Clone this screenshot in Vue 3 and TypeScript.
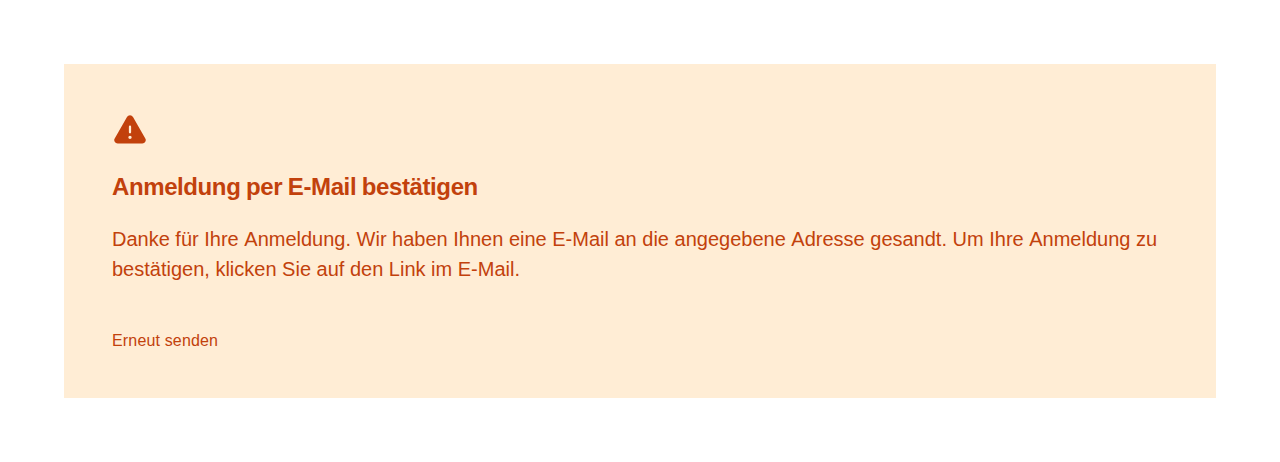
<script setup lang="ts">
const title: string = 'Anmeldung per E-Mail bestätigen'
const message: string =
  'Danke für Ihre Anmeldung. Wir haben Ihnen eine E-Mail an die angegebene Adresse gesandt. Um Ihre Anmeldung zu bestätigen, klicken Sie auf den Link im E-Mail.'
const action: string = 'Erneut senden'
</script>

<template>
  <main class="page">
    <section class="notice" role="status">
      <svg class="icon" viewBox="0 0 256 256" aria-hidden="true">
        <path
          fill="currentColor"
          d="M236.8,188.09,149.35,36.22h0a24.76,24.76,0,0,0-42.7,0L19.2,188.09a23.51,23.51,0,0,0,0,23.72A24.35,24.35,0,0,0,40.55,224h174.9a24.35,24.35,0,0,0,21.33-12.19A23.51,23.51,0,0,0,236.8,188.09ZM120,104a8,8,0,0,1,16,0v40a8,8,0,0,1-16,0Zm8,88a12,12,0,1,1,12-12A12,12,0,0,1,128,192Z"
        />
      </svg>
      <h1 class="title">{{ title }}</h1>
      <p class="message">{{ message }}</p>
      <button class="action" type="button">{{ action }}</button>
    </section>
  </main>
</template>

<style>
body {
  margin: 0;
  background: #fff;
}
</style>

<style scoped>
.page {
  padding: 64px;
  font-family: "Liberation Sans", Arial, sans-serif;
}
.notice {
  display: flex;
  flex-direction: column;
  align-items: flex-start;
  padding: 48px;
  background: #ffedd5;
  color: #c2410c;
}
.icon {
  display: block;
  flex: none;
  width: 36px;
  height: 36px;
}
.title {
  margin: 24px 0 0;
  font-size: 24px;
  font-weight: 600;
  line-height: 30px;
  letter-spacing: -0.4px;
  word-spacing: -0.6px;
  white-space: nowrap;
}
.message {
  margin: 22px 0 0;
  font-size: 20px;
  line-height: 30px;
  font-kerning: none;
}
.action {
  margin: 48px 0 0;
  padding: 0;
  border: 0;
  background: none;
  color: inherit;
  font: 16px/18px "Liberation Sans", Arial, sans-serif;
  letter-spacing: 0.16px;
  cursor: pointer;
}
</style>
